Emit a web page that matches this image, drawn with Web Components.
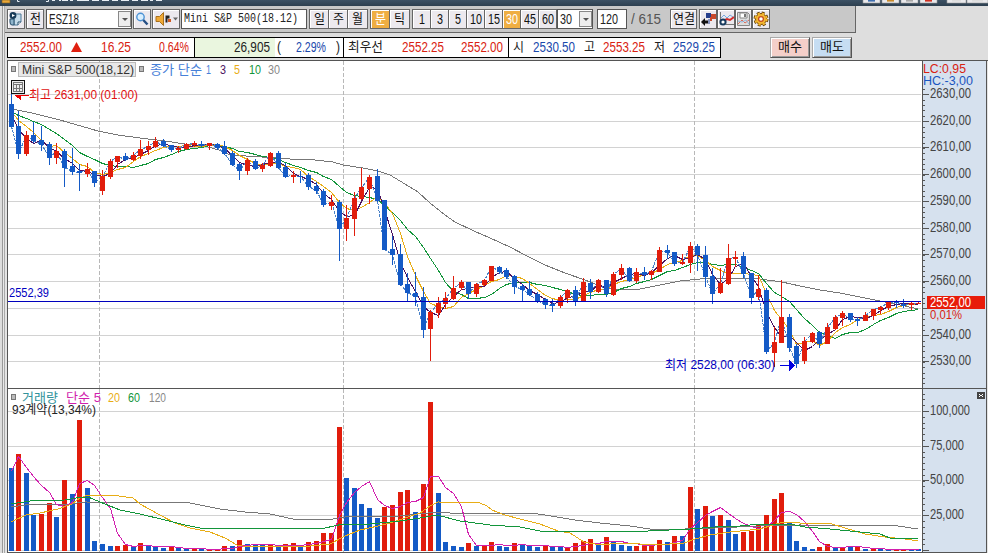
<!DOCTYPE html>
<html lang="ko"><head><meta charset="utf-8"><title>Mini S&amp;P 500</title>
<style>html,body{margin:0;width:988px;height:553px;overflow:hidden;background:#dedede}</style></head>
<body><trading-window></trading-window>
<script>
const SANS='"Liberation Sans","Noto Sans CJK KR",sans-serif', MONO='"Liberation Mono","Noto Sans CJK KR",monospace';
function define(name,html,extra){
  customElements.define(name,class extends HTMLElement{
    connectedCallback(){
      if(this.shadowRoot)return;
      const t=document.createElement('template');
      t.innerHTML=typeof html==='function'?html(this):html;
      this.attachShadow({mode:'open'}).append(t.content.cloneNode(true));
      if(extra)extra(this);
    }
  });
}
const esc=s=>s.replace(/&/g,'&amp;');

// Text squeezed to an exact width: w = width, s = font size, gap = space before
define('fit-text',el=>{
  const w=+el.getAttribute('w'),s=el.getAttribute('s')||14,f=el.hasAttribute('mono')?MONO:SANS;
  return `<style>:host{display:block;flex:none;width:${w}px;height:16px;margin-left:${el.getAttribute('gap')||0}px}span{display:inline-block;vertical-align:top;font:${s}px/16px ${f};height:16px;white-space:pre;transform-origin:0 0}</style><span>${esc(el.textContent)}</span>`;
},el=>{
  const s=el.shadowRoot.querySelector('span'),n=s.getBoundingClientRect().width;
  if(n)s.style.transform=`scaleX(${el.getAttribute('w')/n})`;
});

define('tool-button',el=>`<style>:host{display:flex;flex:none;box-sizing:border-box;align-items:center;justify-content:center;width:${el.getAttribute('w')}px;height:20px;margin-left:${el.getAttribute('gap')||0}px;
 background:${el.hasAttribute('on')?'#efae42':'#ece9ee'};color:${el.hasAttribute('on')?'#fff':'#111'};border:1px solid #666;box-shadow:inset 1px 1px #fff}
 </style><slot></slot>`);
define('tool-group',el=>`<style>:host{display:flex;flex:none;margin-left:${el.getAttribute('gap')||0}px}::slotted(tool-button:not(:first-child)){margin-left:-1px}</style><slot></slot>`);
define('tool-field',el=>`<style>:host{display:flex;flex:none;box-sizing:border-box;align-items:center;justify-content:space-between;width:${el.getAttribute('w')}px;height:20px;margin-left:${el.getAttribute('gap')||0}px;padding-left:2px;background:#fff;border:1px solid #555;color:#222}
 b{box-sizing:border-box;display:grid;place-items:center;width:13px;height:16px;background:#eee;border:1px solid #888}</style><slot></slot>${el.hasAttribute('drop')?'<b><svg width="6" height="3"><path d="M0 0h6L3 3z" fill="#555"/></svg></b>':''}`);

define('title-strip',()=>{
  let m='';
  [[52,3],[59,2],[62,6],[70,3],[77,6],[83,6],[92,7],[102,7],[112,6],[121,8],[132,6],[141,7],[150,3],[156,6]].forEach(([x,w])=>m+=`<path d="M${x} .5h${w}" stroke="#e8eef4" stroke-width="1"/>`);
  let b='';
  [[863,17,'#3f6fb0'],[882,17,'#c98a2a'],[901,17,'#a9a9a9'],[920,17,'#d03020'],[947,19,'#ddd'],[967,21,'#ddd']].forEach(([x,w,c])=>b+=`<rect x="${x}" y="-1" width="${w}" height="4" fill="#e9e9ec" stroke="#999" stroke-width=".6"/><path d="M${x+5} .8h${w-10}" stroke="${c}" stroke-width="1.6"/>`);
  return `<style>:host{display:block;height:6px;background:linear-gradient(#3c5164,#2d3f4f)}svg{display:block}</style><svg width="988" height="6"><rect x="2" y="0" width="8" height="3" fill="#eaa83a" stroke="#7a5a20" stroke-width=".6"/><path d="M17.500 0v1.500h2M46 1.500h2.500v-1.500" stroke="#e8eef4" fill="none"/>${m}${b}</svg>`;
});

define('tool-bar',`<style>:host{display:flex;box-sizing:border-box;align-items:center;width:851px;height:27px;margin-left:5px;padding:0 0 0 2px;background:#c8c8c8;border-right:1px solid #666;border-bottom:1px solid #666}svg{display:block}</style>
<tool-button w="18"><svg width="16" height="16"><path d="M6 3h7v8l-3 3H6z" fill="#c6dcea" stroke="#4a7898"/><path d="M2 8h4v6H4q-2 0-2-3z" fill="#8fb4cc" stroke="#28506e"/><path d="M10 14v-3h3" fill="#fff" stroke="#28506e"/><circle cx="5" cy="4.500" r="3.400" fill="#173a58"/><path d="M4 3l3 1.500L4 6z" fill="#fff"/></svg></tool-button>
<tool-button w="18" gap="1"><fit-text w="11" s="13">전</fit-text></tool-button>
<tool-field w="86" gap="2" drop><fit-text w="30">ESZ18</fit-text></tool-field>
<tool-button w="18" gap="1"><svg width="14" height="14"><circle cx="5.500" cy="5" r="3.700" fill="#d8efff" stroke="#4c92d4" stroke-width="1.400"/><path d="M8.300 8l4.200 4.500" stroke="#254f85" stroke-width="2.400"/></svg></tool-button>
<tool-button w="28" gap="1"><svg width="25" height="16"><path d="M2 5.500h3.500l4-4v13l-4-4H2z" fill="#efa936" stroke="#a8701c"/><path d="M11.500 4.500h4v3h-4zM11.500 7.500h2v4h-2z" fill="#222"/><path d="M14 8h3v3h-3z" fill="#d05a22"/><path d="M19 6.500h5l-2.500 3z" fill="#666"/></svg></tool-button>
<tool-field w="126" gap="1"><fit-text w="114" s="13" mono>Mini S&amp;P 500(18.12)</fit-text></tool-field>
<tool-group gap="2"><tool-button w="20"><fit-text w="11" s="13">일</fit-text></tool-button><tool-button w="20"><fit-text w="11" s="13">주</fit-text></tool-button><tool-button w="21"><fit-text w="11" s="13">월</fit-text></tool-button></tool-group>
<tool-group gap="2"><tool-button w="20" on><fit-text w="11" s="13">분</fit-text></tool-button><tool-button w="21"><fit-text w="11" s="13">틱</fit-text></tool-button></tool-group>
<tool-group gap="2"><tool-button w="19"><fit-text w="6">1</fit-text></tool-button><tool-button w="19"><fit-text w="6">3</fit-text></tool-button><tool-button w="19"><fit-text w="6">5</fit-text></tool-button><tool-button w="19"><fit-text w="12">10</fit-text></tool-button><tool-button w="19"><fit-text w="12">15</fit-text></tool-button><tool-button w="19" on><fit-text w="12">30</fit-text></tool-button><tool-button w="19"><fit-text w="12">45</fit-text></tool-button><tool-button w="19"><fit-text w="12">60</fit-text></tool-button></tool-group>
<tool-field w="36" drop style="margin-left:0"><fit-text w="12">30</fit-text></tool-field>
<tool-field w="30" gap="4"><fit-text w="18">120</fit-text></tool-field>
<fit-text w="30" gap="4" style="color:#555">/ 615</fit-text>
<tool-button w="27" gap="9"><fit-text w="22" s="13">연결</fit-text></tool-button>
<tool-button w="18" gap="2"><svg width="16" height="16"><path d="M6 2h5v5H6z" fill="#253e8c"/><path d="M11 3h5v5h-5zM10 6h2v4h-2z" fill="#c8492c"/><path d="M1 11l4-4v2.500h4v3H5V15z" fill="#111"/><path d="M8 8h2v5H8z" fill="#8893bd"/></svg></tool-button>
<tool-button w="18"><svg width="16" height="16"><path d="M2.500 1v8M8 13.500h8" stroke="#777"/><path d="M3 7l3-3 3 3 3-3 3 2" fill="none" stroke="#78a9df"/><path d="M5 10l4-2 3 1 4-3" fill="none" stroke="#d52b28" stroke-width="2"/><circle cx="5" cy="11" r="2.600" fill="#fff" stroke="#173a5e" stroke-width="2"/></svg></tool-button>
<tool-button w="17"><svg width="15" height="16"><path d="M1.500 1.500h10l2 2v11h-12z" fill="#ddd" stroke="#888"/><path d="M4 2h7v5H4z" fill="#fff" stroke="#888"/><path d="M8 3h2v3H8z" fill="#777"/><path d="M2 13l4-4 3 3 4-3" fill="none" stroke="#dc6b5b"/><path d="M2 10l4 1 4-2 3 4" fill="none" stroke="#8fb6df"/></svg></tool-button>
<tool-button w="18"><svg width="16" height="16"><circle cx="8" cy="8" r="5.800" fill="none" stroke="#5b3a08" stroke-width="3.400" stroke-dasharray="2.700 1.850"/><circle cx="8" cy="8" r="5.500" fill="#f4b731" stroke="#7c4b08"/><circle cx="8" cy="8" r="5.700" fill="none" stroke="#f4b731" stroke-width="2" stroke-dasharray="2.300 2.250"/><circle cx="8" cy="8" r="2.400" fill="#fff" stroke="#c54b1c" stroke-width="1.300"/></svg></tool-button>`);

define('quote-cell',el=>`<style>:host{display:flex;flex:none;box-sizing:border-box;align-items:center;width:${el.getAttribute('w')}px;height:100%;${el.hasAttribute('last')?'':'border-right:1px solid #000;'}${el.hasAttribute('tint')?'background:linear-gradient(90deg,#eaf6df 80px,#fff 80px)':''}}</style><slot></slot>`);
define('order-button',el=>`<style>:host{display:grid;place-items:center;box-sizing:border-box;width:40px;height:21px;margin-left:${el.getAttribute('gap')}px;background:${el.getAttribute('bg')};border:1px solid;border-color:#aaa #555 #555 #aaa;box-shadow:inset 1px 1px #fff,inset -1px -1px #999;color:#111}</style><slot></slot>`);
define('quote-bar',`<style>:host{display:flex;align-items:center;height:27px;padding-left:7px;padding-top:1px;box-sizing:border-box}
.q{display:flex;box-sizing:border-box;width:714px;height:21px;background:#fff;border:1px solid #000;color:#222}.r{color:#d92211}.b{color:#1a49ac}svg{display:block;margin-left:9px}</style>
<div class="q"><quote-cell w="187" class="r"><fit-text w="42" gap="12">2552.00</fit-text><svg width="11" height="10"><path d="M5.500 0L11 10H0z" fill="#e02010"/></svg><fit-text w="30" gap="19">16.25</fit-text><fit-text w="30" gap="28">0.64%</fit-text></quote-cell>
<quote-cell w="149" tint><fit-text w="36" gap="39">26,905</fit-text><fit-text w="4" gap="7">(</fit-text><fit-text w="30" gap="15" class="b">2.29%</fit-text><fit-text w="4" gap="10">)</fit-text></quote-cell>
<quote-cell w="165"><fit-text w="35" gap="4" s="13">최우선</fit-text><fit-text w="42" gap="19" class="r">2552.25</fit-text><fit-text w="42" gap="17" class="r">2552.00</fit-text></quote-cell>
<quote-cell w="211" last><fit-text w="11" s="13" gap="4">시</fit-text><fit-text w="42" gap="9" class="b">2530.50</fit-text><fit-text w="11" s="13" gap="9">고</fit-text><fit-text w="42" gap="8" class="r">2553.25</fit-text><fit-text w="11" s="13" gap="9">저</fit-text><fit-text w="42" gap="8" class="b">2529.25</fit-text></quote-cell></div>
<order-button gap="49" bg="#f4cfc9"><fit-text w="24" s="13">매수</fit-text></order-button><order-button gap="2" bg="#c6ddf2"><fit-text w="24" s="13">매도</fit-text></order-button>`);

// Candles: high, body top, body bottom, low in canvas rows; "R" marks a rising one
const C=`93 104 127 127|111 126 154 159|131 135R154 156|122 135 141 143|126 140 145 151|142 144 158 165|143 151R158 164|149 151 168 187|148 166 172 175|164 171 173 191|163 169R174 177|171 171 183 187|170 176R191 195|159 161R177 179|156 156R162 168|153 156 160 161|152 155R160 161|140 149R156 159|141 146R150 155|137 141R147 148|139 141 146 147|145 145 150 152|146 148R150 153|143 144R149 150|141 143R145 147|141 144 146 147|143 143R146 150|143 144 148 150|141 146 154 155|151 153 165 166|163 164 171 180|158 160R171 175|159 161 169 170|163 165R169 172|152 153R166 167|151 153 168 169|163 167 177 178|171 175R177 183|171 176 177 183|173 175 187 190|182 186 191 194|189 191 205 207|195 202R206 210|200 202 229 261|205 218R229 241|192 198R219 236|168 187R199 200|175 177R189 204|169 176 201 202|200 200 250 250|236 249 255 265|244 254 285 286|273 284 293 301|272 293 297 306|287 297 330 338|310 312R329 361|297 303R313 318|292 298R304 309|276 288R299 300|280 282R288 290|282 282 294 299|283 284R294 297|279 280R285 286|266 266R281 281|266 267 272 274|268 270 277 279|275 276 287 294|284 286 290 301|281 289 295 296|292 294 301 303|298 299 305 309|299 304 306 312|295 297R306 308|289 290R298 303|286 290 301 306|278 282R301 301|279 283 292 299|279 280R292 293|280 280 294 297|272 274R295 296|264 268R275 280|267 268 281 282|268 272R281 283|267 272 275 280|270 271R275 280|247 250R272 272|245 250 253 259|252 252 264 266|254 262R264 265|242 246R263 273|244 246 255 271|246 255 277 287|268 276 294 304|268 283R293 294|244 258R284 285|251 257R259 267|252 256 274 278|273 273 298 304|275 289R297 300|288 290 352 354|327 342R353 367|280 317R343 343|314 317 348 352|344 346 364 368|337 341R361 364|332 333R342 343|331 332 344 348|323 327R344 344|315 317R329 330|311 313R318 326|313 313 320 322|317 319 321 326|312 315R321 321|309 309R316 320|306 307R310 314|301 302R308 310|300 301 303 308|299 304 306 308|301 303R305 310|302 303R304 304`.split('|').map(s=>({v:s.split(/[ R]/).map(Number),up:s.includes('R')}));
const V=`468 454R 473 515 514R 503R 517 480R 494 420R 488 541 544 546 546R 545R 547 543R 546 547 548 547R 548 549 549R 549 549R 549R 546R 546 540R 544 545 545 545R 547 544R 543R 545 542R 541R 533R 533R 427R 478 488 504 508 518 507R 505R 492R 490R 512 484R 402R 493 542 546 547 543R 546 545R 542R 546 547 543R 544 545 547 545R 547 547 547R 543R 541R 539R 544 537R 542 545 546 546R 545R 545R 540R 542 536R 536 487R 509 506R 516 515R 520 534 532R 531R 524R 515R 499R 493R 523 541 547 549 547R 544R 547 547R 547 547R 549 549R 549 549 549R 549R 549 549`.split(' ').map(s=>({y:parseInt(s),up:s.endsWith('R')}));
const UP='#e11d0c',DN='#145ac6',left=i=>Math.floor(9+7.63*i);
const line=(p,c,x='')=>`<polyline points="${p}" fill="none" stroke="${c}" ${x}/>`;
const pts=a=>a.map((y,i)=>`${left(i)+2.5},${(Math.round(y)+.5)}`).join(' ');
function avg(src,n,seed){return src.map((_,i)=>{let s=0;for(let k=i-n+1;k<=i;k++)s+=k<0?seed:src[k];return s/n})}

define('price-chart',()=>{
  let g='';
  for(const y of [94,121,147,174,201,228,254,281,308,335,361,411,446,480,515,550])g+=`<path d="M8 ${y+.5}H921" stroke="#d2d2d2"/>`;
  for(const x of [99,343,694])g+=`<path d="M${x+.5} 61V388M${x+.5} 389V552" stroke="#b8b8b8" stroke-dasharray="4 2"/>`;
  let vol='';V.forEach((b,i)=>vol+=`<rect x="${left(i)}" y="${b.y}" width="5" height="${551-b.y}" fill="${b.up?UP:DN}"/>`);
  const v5=avg(V.map(b=>b.y),5,471);[471,456,467,476,485].forEach((y,i)=>v5[i]=y);
  vol+=line('11,507 25,505 70,504 85,502 190,503 220,509 245,512 270,514 293,519 333,519 345,517 400,516 437,512 450,513 530,513 545,515 575,520 600,523 630,526 650,529 685,529 715,528 760,526 800,525 898,526 918,529','#777')
   +line(pts(v5),'#d21fae')
   +line('11,522 26,515 40,513 58,509 72,504 80,498 88,495 112,495 133,498 140,504 160,515 175,523 190,528 210,532 225,538 237,545 243,546 310,546 330,544 345,536 360,530 378,526 390,523 405,518 420,513 430,506 438,502 480,503 487,506 492,510 505,515 520,519 540,524 558,531 570,533 584,542 600,545 620,543 640,544 670,544 684,543 695,539 710,535 730,532 760,529 783,522 800,523 832,524 845,528 865,534 885,537 905,539 918,541','#e8ad16')
   +line('11,504 30,501 65,500 82,497 88,497 105,504 120,510 140,514 165,520 185,525 200,528 325,528 343,524 370,524 400,521 420,518 437,515 460,521 490,525 520,527 540,531 648,531 690,529 715,527 740,526 760,524 790,524 805,527 830,529 850,531 880,534 890,538 918,539','#12953a');
  const close=C.map(c=>c.up?c.v[1]:c.v[2]-1);
  let cs='';C.forEach((c,i)=>{const x=left(i),[h,t,b,l]=c.v,f=c.up?UP:DN;cs+=`<path d="M${x+2} ${h}h1V${l}h-1z M${x} ${t}h5V${b}h-5z" fill="${f}"/>`});
  const ma=line('12,109 32,113 60,120 98,131 118,135 140,138 165,141 185,144 205,146 222,151 230,155 262,157 290,159 315,160 333,162 343,165 363,168 378,171 390,175 405,184 418,192 430,203 445,215 455,222 474,231 490,238 510,247 525,255 545,265 565,273 585,280 600,286 617,290 640,289 660,285 680,281 700,279 720,278 740,278 760,279 782,282 800,286 820,290 840,293 860,297 880,301 905,306 918,309','#777')
   +line(pts(avg(close,10,109)),'#12953a')+line(pts(avg(close,5,107)),'#e8ad16')+line(pts(avg(close,3,108)),'#4b1260')+line(pts(close),'#4a82c8','stroke-dasharray="3 1"');
  const T=(x,y,w,s,c,z=13)=>`<text x="${x}" y="${y}" textLength="${w}" lengthAdjust="spacingAndGlyphs" fill="${c}" font-size="${z}">${esc(s)}</text>`;
  let ax='<rect x="922" y="61" width="65" height="491" fill="#d6e1ee"/><path d="M922.500 61V552M986.500 61V552" stroke="#555"/>';
  [94,121,147,174,201,228,254,281,308,335,361].forEach((y,k)=>{ax+=`<path d="M923 ${y+.5}h6" stroke="#555"/>`;if(k!=8)ax+=T(930,y+4,41,(2630-10*k)+',00','#444',14)});
  for(let y=89.1;y<388;y+=5.35)ax+=`<path d="M923 ${Math.round(y)+.5}h2" stroke="#555"/>`;
  for(let y=393.5;y<551;y+=5.8)ax+=`<path d="M923 ${Math.round(y)+.5}h2" stroke="#555"/>`;
  [[411,'100,000',40],[446,'75,000',34],[480,'50,000',34],[515,'25,000',34]].forEach(([y,s,w])=>ax+=`<path d="M923 ${y+.5}h6" stroke="#555"/>`+T(930,y+4,w,s,'#444',14));
  ax+=T(923,73,43,'LC:0,95','#d92211',13)+T(923,85,50,'HC:-3,00','#1a55c0',13)+`<rect x="927" y="296" width="58" height="13" fill="#e81c0a"/>`+T(930,307,41,'2552,00','#fff',14)+T(930,319,32,'0,01%','#d92211')
   +'<path d="M923 550.500h6" stroke="#555"/><rect x="977" y="392" width="8" height="7" fill="#444"/><path d="M979 394h1v1h-1zM982 394h1v1h-1zM980 395h2v1h-2zM979 396h1v1h-1zM982 396h1v1h-1z" fill="#fff"/>';
  const sq=(x,y)=>`<rect x="${x+.5}" y="${y+.5}" width="4" height="5" fill="#bbb" stroke="#777"/>`;
  return `<style>:host{display:block;height:493px}svg{display:block}text{font-family:${SANS};white-space:pre}</style>
  <svg width="988" height="493" viewBox="0 60 988 493" shape-rendering="crispEdges">
  <rect x="0" y="60" width="988" height="493" fill="#e4e4e4"/><rect x="8" y="61" width="914" height="491" fill="#fff"/>
  ${g}${vol}${ma}${cs}
  <path d="M8 301.500H921" stroke="#0000bd"/>${ax}
  <path d="M7 60.500H988M7 388.500H987M7 552.500H987M7.500 60V553" stroke="#555" fill="none"/>
  ${sq(11,66)}<rect x="18.500" y="62.500" width="117" height="14" fill="#e8e8e8" stroke="#bbb"/>${T(22,74,112,'Mini S&P 500(18,12)','#333')}${sq(139,66)}
  ${T(150,74,52,'종가 단순','#4680d8')}${T(206,74,5,'1','#4680d8')}${T(220,74,6,'3','#4b1260')}${T(234,74,6,'5','#e8ad16')}${T(249,74,12,'10','#12953a')}${T(268,74,12,'30','#888')}
  <rect x="11.500" y="80.500" width="13" height="13" fill="#eee" stroke="#111"/><path d="M13.500 82.500h9v9h-9zM13 84.500h9M13 88.500h9M16.500 84v8M19.500 84v8" fill="none" stroke="#777"/>
  <path d="M14 95h7v5z" fill="#e00"/><path d="M20 95.500h9" stroke="#e00"/>${T(29,99,109,'최고 2631,00 (01:00)','#e01010')}
  ${T(9,297,40,'2552,39','#0000c0')}
  ${T(665,369,110,'최저 2528,00 (06:30)','#0000c0')}<path d="M780 365.500h10" stroke="#0000e0"/><path d="M789 360l6 5.500-6 5.500z" fill="#0000e0"/>
  ${sq(11,394)}${T(22,402,36,'거래량','#31929b')}${T(66,402,35,'단순 5','#d21fae')}${T(108,402,12,'20','#e8ad16')}${T(128,402,12,'60','#12953a')}${T(149,402,17,'120','#888')}
  ${T(12,414,84,'93계약(13,34%)','#222',12)}
  </svg>`;
});

define('trading-window',`<style>:host{display:flex;flex-direction:column;width:988px;height:553px;position:relative;background:#dedede}.f{position:absolute;left:0;top:6px;width:5px;height:547px;background:linear-gradient(90deg,#ddd 0 2px,#999 2px 3px,#e8e8e8 3px 4px,#aaa 4px 5px)}</style>
<title-strip></title-strip><tool-bar></tool-bar><quote-bar></quote-bar><price-chart></price-chart><div class="f"></div>`);
</script></body></html>
